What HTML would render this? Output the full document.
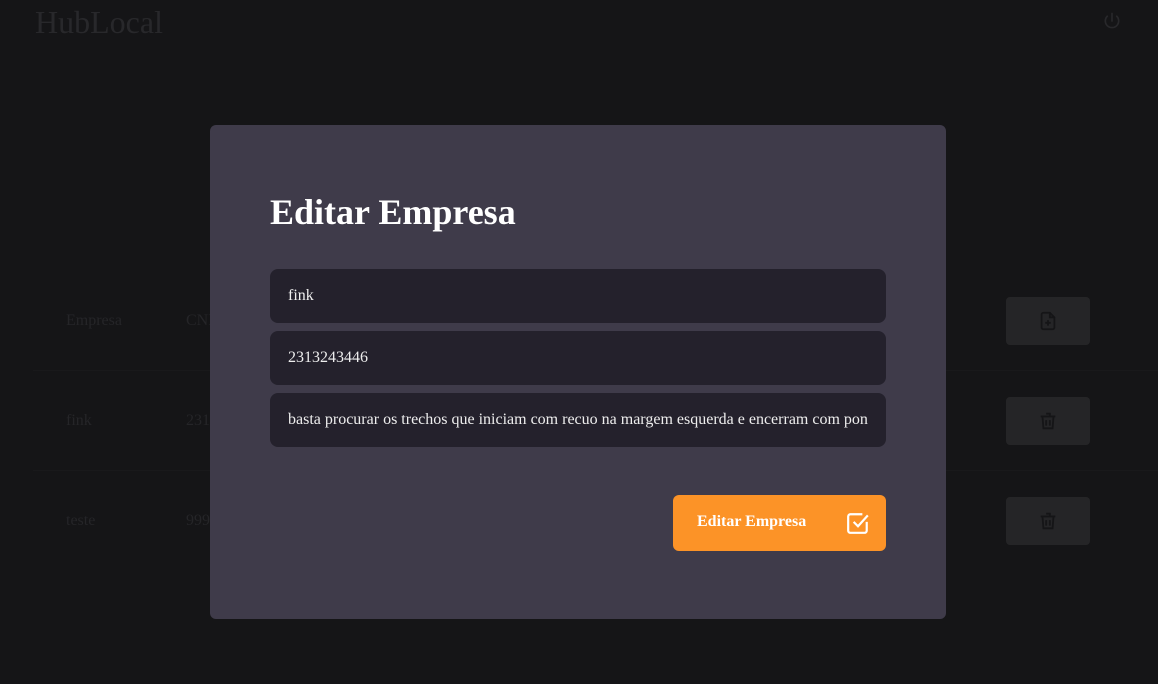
<!DOCTYPE html>
<html><head><meta charset="utf-8"><style>
*{margin:0;padding:0;box-sizing:border-box}
body{width:1158px;height:684px;background:#151517;font-family:"Liberation Serif",serif;position:relative;overflow:hidden}
.logo{position:absolute;left:35px;top:4px;font-size:32px;color:#28282b}
.pw{position:absolute;left:1102px;top:11px}
.row{position:absolute;left:33px;width:1125px;height:100px;border-top:1px solid #19191b}
.t{position:absolute;font-size:16px;color:#252528}
.btn{position:absolute;left:1006px;width:84px;height:48px;background:#252527;border-radius:4px;display:flex;align-items:center;justify-content:center}
.modal{position:absolute;left:210px;top:125px;width:736px;height:494px;background:#3f3b4a;border-radius:6px}
h1{position:absolute;left:60px;top:66px;font-size:36px;color:#fff;font-weight:bold}
.in{position:absolute;left:60px;width:616px;height:54px;background:#24212c;border-radius:8px;color:#eee;font-size:16px;padding:0 18px;line-height:54px;white-space:nowrap;overflow:hidden}
.sub{position:absolute;left:463px;top:370px;width:213px;height:56px;background:#fc9327;border-radius:6px;color:#fff;font-weight:bold;font-size:16px}
</style></head><body>
<div class="logo">HubLocal</div>
<svg class="pw" width="20" height="20" viewBox="0 0 24 24" fill="none" stroke="#28282b" stroke-width="2" stroke-linecap="round"><path d="M12 3v9"/><path d="M6.3 6.3a8 8 0 1 0 11.4 0"/></svg>
<div class="t" style="left:66px;top:312px">Empresa</div><div class="t" style="left:186px;top:312px">CNPJ</div>
<div class="row" style="top:370px"></div><div class="row" style="top:470px"></div>
<div class="t" style="left:66px;top:412px">fink</div><div class="t" style="left:186px;top:412px">2313243446</div>
<div class="t" style="left:66px;top:512px">teste</div><div class="t" style="left:186px;top:512px">9999</div>
<div class="btn" style="top:297px"><svg width="22" height="22" viewBox="0 0 24 24" fill="none" stroke="#151517" stroke-width="2"><path d="M14 3H7a2 2 0 0 0-2 2v14a2 2 0 0 0 2 2h10a2 2 0 0 0 2-2V8z"/><path d="M14 3v5h5M12 11v6M9 14h6"/></svg></div>
<div class="btn" style="top:397px"><svg width="22" height="22" viewBox="0 0 24 24" fill="none" stroke="#151517" stroke-width="2"><path d="M4 7h16M10 4h4v3M6 7l1 13h10l1-13M10 11v6M14 11v6"/></svg></div>
<div class="btn" style="top:497px"><svg width="22" height="22" viewBox="0 0 24 24" fill="none" stroke="#151517" stroke-width="2"><path d="M4 7h16M10 4h4v3M6 7l1 13h10l1-13M10 11v6M14 11v6"/></svg></div>
<div class="modal">
<h1>Editar Empresa</h1>
<div class="in" style="top:144px">fink</div>
<div class="in" style="top:206px">2313243446</div>
<div class="in" style="top:268px">basta procurar os trechos que iniciam com recuo na margem esquerda e encerram com pon</div>
<div class="sub"><span style="position:absolute;left:24px;top:18px">Editar Empresa</span>
<svg style="position:absolute;left:173px;top:16px" width="24" height="24" viewBox="0 0 22 22" fill="none" stroke="#fff" stroke-width="2"><path d="M19 10v8a2 2 0 0 1-2 2H4a2 2 0 0 1-2-2V5a2 2 0 0 1 2-2h11"/><path d="M7 10l4 4 9-10"/></svg></div>
</div>
</body></html>
